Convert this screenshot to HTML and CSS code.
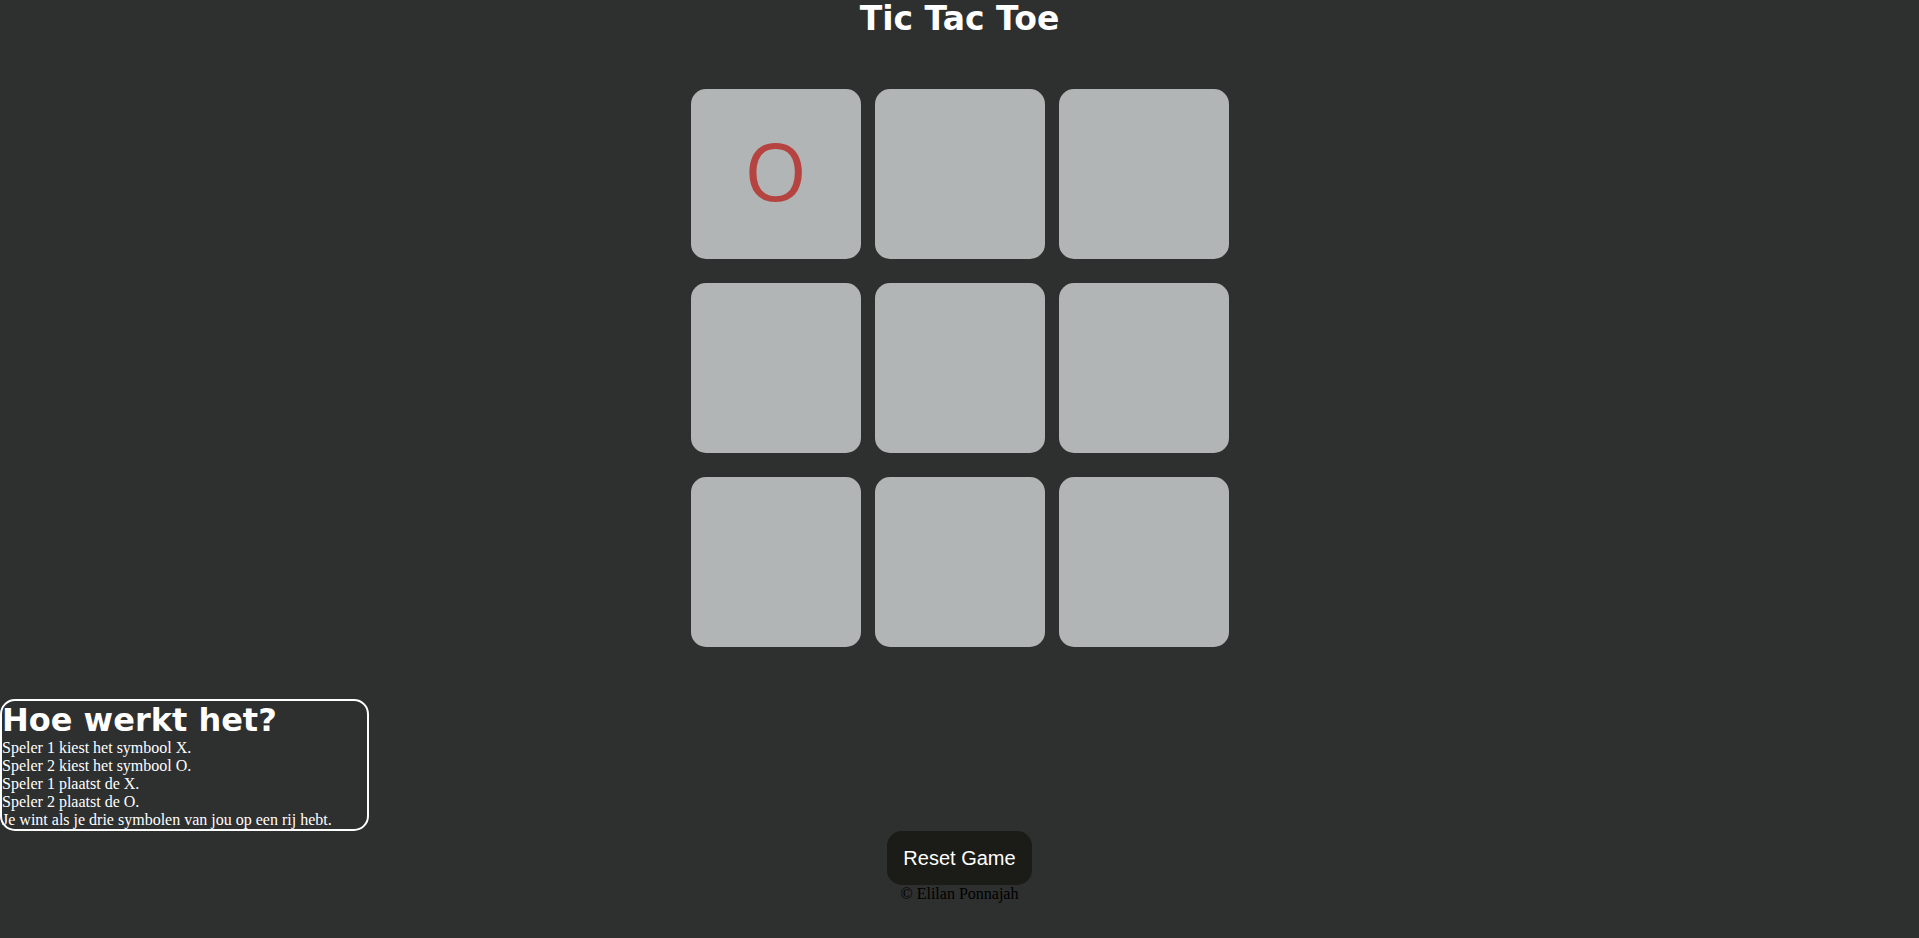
FILE: index.html
```html
<!DOCTYPE html>
<html lang="nl">
<head>
<meta charset="utf-8">
<title>Tic Tac Toe</title>
<link rel="stylesheet" href="styles.css">
</head>
<body>
<h1 class="title">Tic Tac Toe</h1>
<div class="board">
  <div class="cell"><span class="mark-o">O</span></div>
  <div class="cell"></div>
  <div class="cell"></div>
  <div class="cell"></div>
  <div class="cell"></div>
  <div class="cell"></div>
  <div class="cell"></div>
  <div class="cell"></div>
  <div class="cell"></div>
</div>
<div class="info">
  <h2 class="info-title">Hoe werkt het?</h2>
  <p class="info-line">Speler 1 kiest het symbool X.</p>
  <p class="info-line">Speler 2 kiest het symbool O.</p>
  <p class="info-line">Speler 1 plaatst de X.</p>
  <p class="info-line">Speler 2 plaatst de O.</p>
  <p class="info-line">Je wint als je drie symbolen van jou op een rij hebt.</p>
</div>
<div class="actions">
  <button class="reset">Reset Game</button>
</div>
<footer class="footer">© Elilan Ponnajah</footer>
</body>
</html>
```
FILE: styles.css
```css
html, body {
  margin: 0;
  padding: 0;
}
body {
  background: #2e2f2f;
  font-family: "Liberation Serif", "Times New Roman", serif;
  font-size: 16px;
  color: #000;
}
.title {
  margin: 0;
  height: 37px;
  line-height: 37px;
  text-align: center;
  font-family: "DejaVu Sans", Verdana, sans-serif;
  font-weight: bold;
  font-size: 33px;
  color: #ffffff;
}
.board {
  display: grid;
  grid-template-columns: repeat(3, 170px);
  grid-auto-rows: 170px;
  column-gap: 14px;
  row-gap: 24px;
  justify-content: center;
  margin: 52px 0 52px;
}
.cell {
  background: #b2b5b6;
  border-radius: 15px;
  display: flex;
  align-items: center;
  justify-content: center;
}
.mark-o {
  font-family: "Open Sans", "Noto Sans", sans-serif;
  font-size: 80px;
  color: #b5433f;
  line-height: 1;
  margin-bottom: 8px;
}
.info {
  width: 365px;
  border: 2px solid #ffffff;
  border-radius: 15px;
  color: #ffffff;
}
.info-title {
  margin: 0;
  line-height: 38px;
  font-family: "DejaVu Sans", Verdana, sans-serif;
  font-weight: bold;
  font-size: 32px;
}
.info-line {
  margin: 0;
}
.actions {
  display: flex;
  justify-content: center;
}
.reset {
  background: #1b1b17;
  color: #ffffff;
  border: none;
  border-radius: 15px;
  padding: 16px 16px 15px;
  font-family: "Liberation Sans", Arial, sans-serif;
  font-size: 20px;
}
.footer {
  text-align: center;
  color: #000;
}
```
